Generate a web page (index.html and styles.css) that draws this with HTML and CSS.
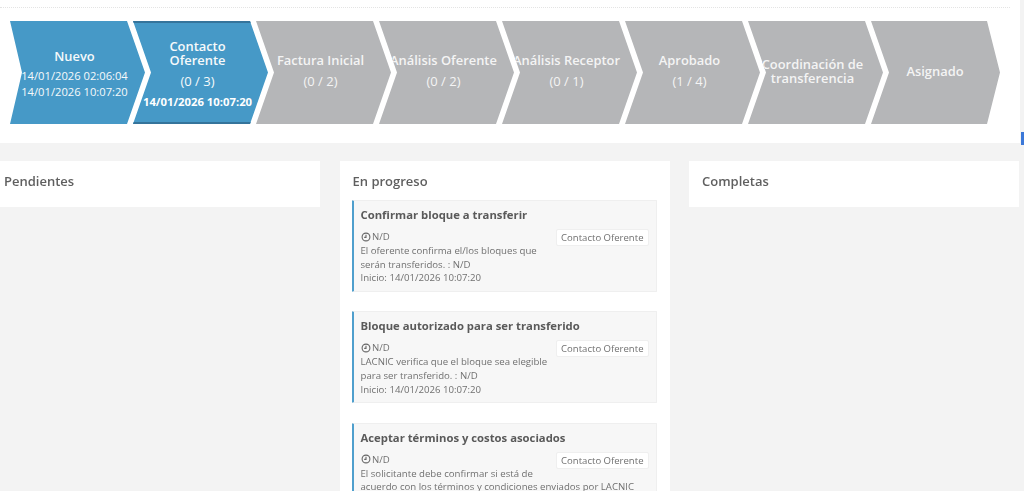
FILE: index.html
```
<!DOCTYPE html>
<html lang="es">
<head>
<meta charset="utf-8">
<title>Transferencia</title>
<link rel="stylesheet" href="styles.css">
</head>
<body>
<div class="page">
  <header class="top">
    <div class="dots"></div>
    <nav class="steps">
      <div class="step done first"><div class="name">Nuevo</div><div class="date">14/01/2026 02:06:04</div><div class="date">14/01/2026 10:07:20</div></div>
      <div class="step current"><div class="name">Contacto<br>Oferente</div><div class="count">(0 / 3)</div><div class="date strong">14/01/2026 10:07:20</div></div>
      <div class="step"><div class="name">Factura Inicial</div><div class="count">(0 / 2)</div></div>
      <div class="step"><div class="name">Análisis Oferente</div><div class="count">(0 / 2)</div></div>
      <div class="step"><div class="name">Análisis Receptor</div><div class="count">(0 / 1)</div></div>
      <div class="step"><div class="name">Aprobado</div><div class="count">(1 / 4)</div></div>
      <div class="step"><div class="name">Coordinación de<br>transferencia</div></div>
      <div class="step last"><div class="name">Asignado</div></div>
    </nav>
  </header>
  <span class="edge"></span>
  <main class="board">
    <section class="col col-left"><h2>Pendientes</h2></section>
    <section class="col col-mid">
      <h2>En progreso</h2>
      <article class="card">
        <h3>Confirmar bloque a transferir</h3>
        <span class="badge">Contacto Oferente</span>
        <p><svg class="clock" viewBox="0 0 10 10"><circle cx="5" cy="5" r="3.9"/><path d="M5 2.8V5.4H3.2"/></svg> N/D<br>El oferente confirma el/los bloques que serán transferidos. : N/D<br>Inicio: 14/01/2026 10:07:20</p>
      </article>
      <article class="card">
        <h3>Bloque autorizado para ser transferido</h3>
        <span class="badge">Contacto Oferente</span>
        <p><svg class="clock" viewBox="0 0 10 10"><circle cx="5" cy="5" r="3.9"/><path d="M5 2.8V5.4H3.2"/></svg> N/D<br>LACNIC verifica que el bloque sea elegible para ser transferido. : N/D<br>Inicio: 14/01/2026 10:07:20</p>
      </article>
      <article class="card">
        <h3>Aceptar términos y costos asociados</h3>
        <span class="badge">Contacto Oferente</span>
        <p><svg class="clock" viewBox="0 0 10 10"><circle cx="5" cy="5" r="3.9"/><path d="M5 2.8V5.4H3.2"/></svg> N/D<br>El solicitante debe confirmar si está de acuerdo con los términos y condiciones enviados por LACNIC</p>
      </article>
    </section>
    <section class="col col-right"><h2>Completas</h2></section>
  </main>
</div>
</body>
</html>
```
FILE: styles.css
```
* { box-sizing: border-box; }
html, body { margin: 0; height: 100%; overflow: hidden; }
body { background: #f3f3f3; font-family: "Open Sans", "Liberation Sans", sans-serif; color: #666; }
.page { position: relative; width: 1024px; height: 491px; overflow: hidden; filter: blur(0.5px); }
.top { width: 1020px; height: 143px; background: #fff; padding-top: 7px; }
.dots { width: 1010px; border-top: 1px dotted #e4e4e4; }
.steps { display: flex; margin: 13px 0 0 10px; }
.step {
  flex: 0 0 135px; min-width: 0; height: 103px; margin-right: -12px; padding: 0 6px 3px 0;
  display: flex; flex-direction: column; align-items: center; justify-content: center;
  text-align: center; color: #f4f4f4; background: #b5b6b8;
  clip-path: polygon(0 0, 117px 0, 135px 50%, 117px 100%, 0 100%, 18px 50%);
  white-space: nowrap;
}
.first { clip-path: polygon(0 0, 117px 0, 135px 50%, 117px 100%, 0 100%, 12px 50%); }
.last { flex-basis: 129px; padding-right: 1px; clip-path: polygon(0 0, 116px 0, 129px 50%, 116px 100%, 0 100%, 18px 50%); }
.done, .current { background: #4699c7; color: #f6f9fb; padding-top: 3px; padding-bottom: 0; }
.current { border-top: 2px solid #35749b; border-bottom: 2px solid #35749b; }
.name { font-size: 12.9px; line-height: 14px; font-weight: 600; }
.count { font-size: 13px; line-height: 16px; margin-top: 6px; }
.date { font-size: 11.2px; line-height: 15.5px; }
.done .name { margin-bottom: 5px; }
.date.strong { font-weight: 700; margin-top: 5px; color: #fff; font-size: 11.3px; }
.edge { position: absolute; left: 1021px; top: 132px; width: 3px; height: 13px; background: #3b78d8; }
.board { display: grid; grid-template-columns: 320px 330px 330px; column-gap: 19.5px; margin-top: 18px; align-items: start; }
.col { background: #fff; min-height: 46px; padding: 11px 13px 0; }
.col-left { padding-left: 4px; }
.col h2 { margin: 0; font-size: 13px; line-height: 18px; font-weight: 600; color: #5f5f5f; }
.col-mid { height: 340px; }
.col-mid h2 { margin-bottom: 10px; }
.card { height: 92px; margin: 0 0 19.4px -1px; width: 305px; background: #f7f7f7; border: 1px solid #efefef; border-left: 2px solid #4f9fcd; padding: 5px 7px 0; border-radius: 1px; }
.card:last-child { height: 120px; }
.card h3 { margin: 0 0 7px; font-size: 11.3px; line-height: 17px; font-weight: 700; color: #5a5a5a; }
.card p { margin: 0; font-size: 9.65px; line-height: 13.8px; color: #707070; }
.badge { float: right; margin-top: -1px; margin-left: 6px; padding: 0 4px; height: 17px; line-height: 15px; font-size: 9.55px; color: #707070; background: #fff; border: 1px solid #efefef; border-radius: 2px; }
.clock { width: 10px; height: 10px; vertical-align: -1.5px; margin-right: -1px; fill: none; stroke: #666; stroke-width: 1.1; }
```
